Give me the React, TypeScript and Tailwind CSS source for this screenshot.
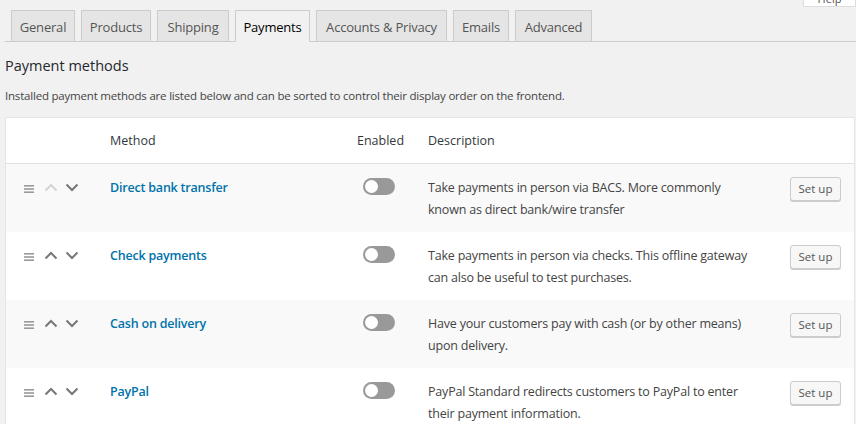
import React from "react";

const tabs = [
  { label: "General", w: "w-[64px]" },
  { label: "Products", w: "w-[70px]" },
  { label: "Shipping", w: "w-[72px]" },
  { label: "Payments", w: "w-[75px]", active: true },
  { label: "Accounts & Privacy", w: "w-[131px]" },
  { label: "Emails", w: "w-[56px]" },
  { label: "Advanced", w: "w-[77px]" },
];

const rows = [
  {
    name: "Direct bank transfer",
    desc: ["Take payments in person via BACS. More commonly", "known as direct bank/wire transfer"],
    upDisabled: true,
  },
  {
    name: "Check payments",
    desc: ["Take payments in person via checks. This offline gateway", "can also be useful to test purchases."],
  },
  {
    name: "Cash on delivery",
    desc: ["Have your customers pay with cash (or by other means)", "upon delivery."],
  },
  {
    name: "PayPal",
    desc: ["PayPal Standard redirects customers to PayPal to enter", "their payment information."],
  },
];

function Hamburger() {
  return (
    <svg width="10" height="8" viewBox="0 0 10 8" className="block">
      <rect x="0" y="0" width="10" height="1.6" fill="#9a9a9a" />
      <rect x="0" y="3.2" width="10" height="1.6" fill="#9a9a9a" />
      <rect x="0" y="6.4" width="10" height="1.6" fill="#9a9a9a" />
    </svg>
  );
}

function Chevron({ up, color }: { up?: boolean; color: string }) {
  return (
    <svg width="14" height="9" viewBox="0 0 14 9" className="block">
      <path
        d={up ? "M1.5 7.5 L7 2 L12.5 7.5" : "M1.5 1.5 L7 7 L12.5 1.5"}
        fill="none"
        stroke={color}
        strokeWidth="2"
      />
    </svg>
  );
}

export default function App() {
  return (
    <div
      className="w-[856px] h-[424px] overflow-hidden bg-[#f1f1f1] relative text-[#23282d]"
      style={{ fontFamily: '"Open Sans", "Noto Sans", sans-serif' }}
    >
      <div className="absolute right-0 top-[-6px] w-[53px] h-[13px] bg-white border border-[#ddd] border-t-0 text-[11px] text-[#555] flex items-end justify-center leading-none">
        <span className="translate-y-[-2px]">Help</span>
      </div>

      <div className="pt-[10px] pl-[5px] pr-0">
        <div className="flex items-end border-b border-[#ccc] h-[32px] pl-[6px]">
          {tabs.map((t) => (
            <div
              key={t.label}
              className={`${t.w} mr-[6px] h-[31px] border border-[#ccc] flex items-center justify-center pt-[3px] text-[13px] tracking-[-0.2px] ${
                t.active
                  ? "bg-[#f1f1f1] text-black border-b-[#f1f1f1] h-[32px] mb-[-1px]"
                  : "bg-[#e5e5e5] text-[#555] border-b-0"
              }`}
            >
              {t.label}
            </div>
          ))}
        </div>

        <h2 className="text-[14.5px] mt-[14px] leading-[20px] text-[#23282d]">Payment methods</h2>
        <p className="text-[11.5px] tracking-[-0.2px] mt-[10px] leading-[20px] text-[#444]">
          Installed payment methods are listed below and can be sorted to control their display order on the frontend.
        </p>

        <div className="mt-[11px] w-[850px] border border-[#e5e5e5] bg-white">
          <div className="flex h-[46px] items-center pt-[2px] text-[12.5px] text-[#32373c] border-b border-[#e1e1e1]">
            <div className="w-[104px]" />
            <div className="w-[247px]">Method</div>
            <div className="w-[71px]">Enabled</div>
            <div>Description</div>
          </div>
          {rows.map((r, i) => (
            <div key={r.name} className={`flex h-[68px] ${i % 2 === 0 ? "bg-[#f9f9f9]" : "bg-white"}`}>
              <div className="w-[104px] pl-[18px] pt-[19px] flex items-start">
                <div className="pt-[2px]">
                  <Hamburger />
                </div>
                <div className="ml-[10px]">
                  <Chevron up color={r.upDisabled ? "#d4d4d4" : "#777"} />
                </div>
                <div className="ml-[7px]">
                  <Chevron color="#777" />
                </div>
              </div>
              <div className="w-[247px] pt-[13px] text-[12.5px] leading-[22px] font-semibold text-[#0073aa] tracking-[-0.2px]">
                {r.name}
              </div>
              <div className="w-[71px] pt-[14px] pl-[6px]">
                <div className="w-[32px] h-[17px] rounded-full bg-[#999] flex items-center pl-[2px]">
                  <div className="w-[13px] h-[13px] rounded-full bg-white" />
                </div>
              </div>
              <div className="w-[362px] pt-[13px] text-[12.5px] leading-[22px] text-[#444] tracking-[-0.2px]">
                {r.desc.map((d) => (
                  <div key={d}>{d}</div>
                ))}
              </div>
              <div className="pt-[13px]">
                <div className="w-[51px] h-[24px] border border-[#ccc] bg-[#f7f7f7] rounded-[3px] shadow-[0_1px_0_#ccc] text-[11.5px] text-[#555] flex items-center justify-center">
                  Set up
                </div>
              </div>
            </div>
          ))}
        </div>
      </div>
    </div>
  );
}
